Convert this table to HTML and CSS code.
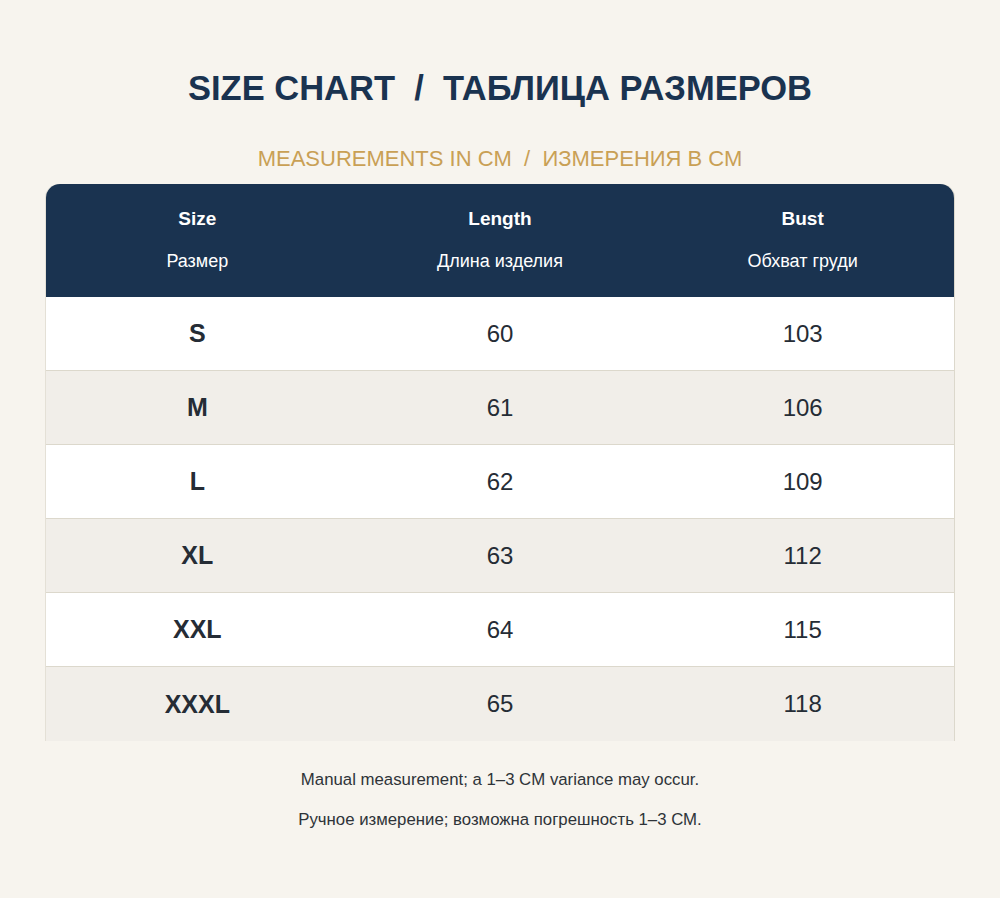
FILE: index.html
```html
<!DOCTYPE html>
<html>
<head>
<meta charset="utf-8">
<link rel="stylesheet" href="styles.css">
</head>
<body>
<div class="page">
  <h1 class="title">SIZE CHART&nbsp; /&nbsp; ТАБЛИЦА РАЗМЕРОВ</h1>
  <div class="subtitle">MEASUREMENTS IN CM&nbsp; /&nbsp; ИЗМЕРЕНИЯ В СМ</div>
  <div class="table">
    <div class="head">
      <div class="hcell"><div class="en">Size</div><div class="ru">Размер</div></div>
      <div class="hcell"><div class="en">Length</div><div class="ru">Длина изделия</div></div>
      <div class="hcell"><div class="en">Bust</div><div class="ru">Обхват груди</div></div>
    </div>
    <div class="row"><div class="cell size">S</div><div class="cell">60</div><div class="cell">103</div></div>
    <div class="row alt"><div class="cell size">M</div><div class="cell">61</div><div class="cell">106</div></div>
    <div class="row"><div class="cell size">L</div><div class="cell">62</div><div class="cell">109</div></div>
    <div class="row alt"><div class="cell size">XL</div><div class="cell">63</div><div class="cell">112</div></div>
    <div class="row"><div class="cell size">XXL</div><div class="cell">64</div><div class="cell">115</div></div>
    <div class="row alt last"><div class="cell size">XXXL</div><div class="cell">65</div><div class="cell">118</div></div>
  </div>
  <div class="notes">
    <p>Manual measurement; a 1–3 CM variance may occur.</p>
    <p>Ручное измерение; возможна погрешность 1–3 СМ.</p>
  </div>
</div>
</body>
</html>
```
FILE: styles.css
```css
html, body {
  margin: 0;
  padding: 0;
}
body {
  background: #f7f4ee;
  font-family: "Liberation Sans", Arial, sans-serif;
  width: 1000px;
  height: 898px;
  overflow: hidden;
}
.page {
  display: flex;
  flex-direction: column;
  align-items: center;
  padding-top: 68px;
}
.title {
  margin: 0;
  font-size: 34.5px;
  line-height: 40px;
  font-weight: 700;
  color: #1a3350;
}
.subtitle {
  margin-top: 38px;
  font-size: 22px;
  line-height: 26px;
  color: #c9a055;
}
.table {
  margin-top: 12px;
  width: 908px;
  display: flex;
  flex-direction: column;
  border-radius: 14px 14px 0 0;
  overflow: hidden;
  box-shadow: 1px 0 0 #dcd8cc, -1px 0 0 #e4e0d6;
}
.head {
  background: #1a3350;
  height: 113px;
  display: grid;
  grid-template-columns: 1fr 1fr 1fr;
}
.hcell {
  display: flex;
  flex-direction: column;
  align-items: center;
  color: #ffffff;
  padding-top: 24px;
}
.en {
  font-size: 19px;
  font-weight: 700;
  line-height: 22px;
}
.ru {
  margin-top: 21px;
  font-size: 18px;
  line-height: 20px;
}
.row {
  display: grid;
  grid-template-columns: 1fr 1fr 1fr;
  height: 73px;
  background: #ffffff;
  border-bottom: 1px solid #dcd8cc;
}
.row.alt {
  background: #f1eee9;
}
.row.last {
  border-bottom: none;
  height: 74px;
}
.cell {
  display: flex;
  align-items: center;
  justify-content: center;
  font-size: 24px;
  color: #252c35;
}
.cell.size {
  font-weight: 700;
  font-size: 25px;
}
.notes {
  margin-top: 29px;
  text-align: center;
  font-size: 16.8px;
  color: #2e3338;
}
.notes p {
  margin: 0 0 20px 0;
  line-height: 20px;
}
```
